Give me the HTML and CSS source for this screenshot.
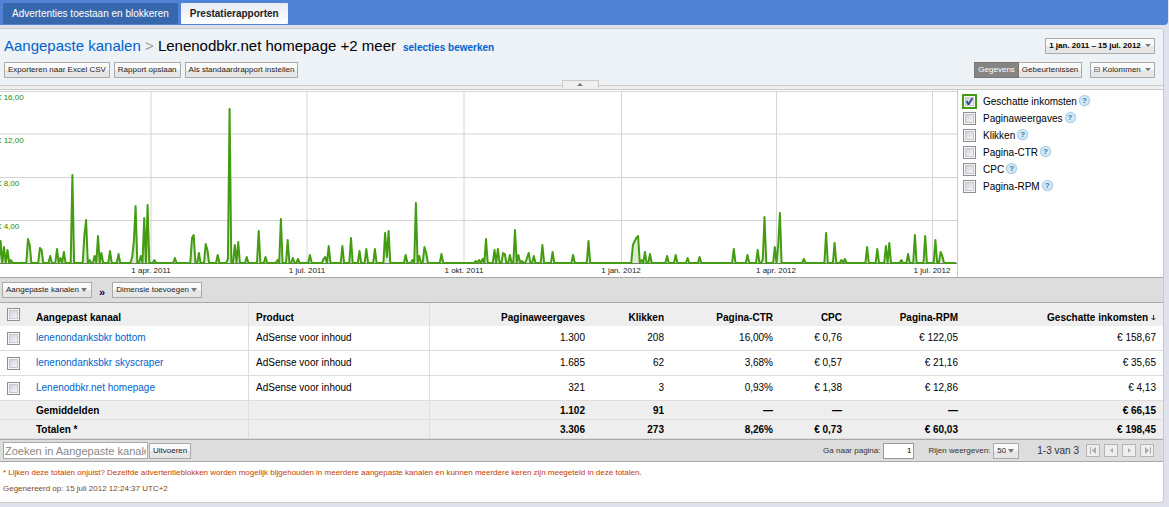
FILE: index.html
```html
<!DOCTYPE html>
<html lang="nl">
<head>
  <meta charset="UTF-8">
  <meta name="viewport" content="width=device-width, initial-scale=1.0">
  <title>Prestatierapporten</title>
  <link rel="stylesheet" href="styles.css">
</head>
<body>

<nav class="tabs">
  <a class="tab" href="#">Advertenties toestaan en blokkeren</a>
  <a class="tab active" href="#">Prestatierapporten</a>
</nav>

<main class="panel">

  <header class="head">
    <div class="row">
      <h1><a href="#">Aangepaste kanalen</a> <span class="sep">&gt;</span> Lenenodbkr.net homepage +2 meer</h1>
      <a class="edit" href="#">selecties bewerken</a>
      <button class="btn date right" type="button">1 jan. 2011 – 15 jul. 2012 <span class="arrow"></span></button>
    </div>
    <div class="row tools">
      <button class="btn" type="button">Exporteren naar Excel CSV</button>
      <button class="btn" type="button">Rapport opslaan</button>
      <button class="btn" type="button">Als standaardrapport instellen</button>
      <div class="switch right">
        <button class="btn on" type="button">Gegevens</button><button class="btn" type="button">Gebeurtenissen</button>
      </div>
      <button class="btn columns" type="button">
        <svg width="6" height="5" viewBox="0 0 6 5"><path d="M0 .5h6M0 2.5h6M0 4.5h6M.5 0v5M5.5 0v5" stroke="#999" fill="none"/></svg>
        Kolommen <span class="arrow"></span>
      </button>
    </div>
    <button class="handle" type="button" aria-label="Inklappen"><svg width="6" height="3" viewBox="0 0 6 3"><path d="M3 0l3 3H0z" fill="#777"/></svg></button>
  </header>

  <section class="report">
    <svg class="chart" viewBox="0 0 957 187">
      <g class="grid">
        <path d="M0 1.5H957M0 44H957M0 87.5H957M0 130.5H957"/>
        <path d="M151 1V173M307 1V173M464 1V173M621.5 1V173M776.5 1V173M932.5 1V173"/>
      </g>
      <path class="axis" d="M0 173.5H957"/>
      <path class="line" id="line"/>
      <g class="money">
        <text x="-3" y="10">€ 16,00</text>
        <text x="-3" y="53">€ 12,00</text>
        <text x="-3" y="96">€ 8,00</text>
        <text x="-3" y="139">€ 4,00</text>
      </g>
      <g class="dates">
        <text x="151" y="183">1 apr. 2011</text>
        <text x="307" y="183">1 jul. 2011</text>
        <text x="464" y="183">1 okt. 2011</text>
        <text x="621" y="183">1 jan. 2012</text>
        <text x="776" y="183">1 apr. 2012</text>
        <text x="932" y="183">1 jul. 2012</text>
      </g>
    </svg>
    <ul class="legend">
      <li class="picked"><input type="checkbox" id="m1" checked><label for="m1">Geschatte inkomsten</label><a class="help" href="#">?</a></li>
      <li><input type="checkbox" id="m2"><label for="m2">Paginaweergaves</label><a class="help" href="#">?</a></li>
      <li><input type="checkbox" id="m3"><label for="m3">Klikken</label><a class="help" href="#">?</a></li>
      <li><input type="checkbox" id="m4"><label for="m4">Pagina-CTR</label><a class="help" href="#">?</a></li>
      <li><input type="checkbox" id="m5"><label for="m5">CPC</label><a class="help" href="#">?</a></li>
      <li><input type="checkbox" id="m6"><label for="m6">Pagina-RPM</label><a class="help" href="#">?</a></li>
    </ul>
  </section>

  <div class="bar dims">
    <select class="btn" aria-label="Dimensie"><option>Aangepaste kanalen</option></select>
    <span class="raquo">»</span>
    <select class="btn" aria-label="Tweede dimensie"><option>Dimensie toevoegen</option></select>
  </div>

  <table class="data">
    <colgroup>
      <col class="c-check"><col class="c-name"><col class="c-product"><col class="c-views"><col class="c-clicks">
      <col class="c-ctr"><col class="c-cpc"><col class="c-rpm"><col>
    </colgroup>
    <thead>
      <tr>
        <th><input type="checkbox" aria-label="Alles selecteren"></th>
        <th>Aangepast kanaal</th>
        <th>Product</th>
        <th>Paginaweergaves</th>
        <th>Klikken</th>
        <th>Pagina-CTR</th>
        <th>CPC</th>
        <th>Pagina-RPM</th>
        <th>Geschatte inkomsten <svg width="5" height="6" viewBox="0 0 5 6"><path d="M2.5 0v5M.5 3l2 2 2-2" stroke="#333" fill="none"/></svg></th>
      </tr>
    </thead>
    <tbody>
      <tr>
        <td><input type="checkbox" aria-label="lenenondanksbkr bottom"></td>
        <td><a href="#">lenenondanksbkr bottom</a></td>
        <td>AdSense voor inhoud</td>
        <td>1.300</td><td>208</td><td>16,00%</td><td>€ 0,76</td><td>€ 122,05</td><td>€ 158,67</td>
      </tr>
      <tr>
        <td><input type="checkbox" aria-label="lenenondanksbkr skyscraper"></td>
        <td><a href="#">lenenondanksbkr skyscraper</a></td>
        <td>AdSense voor inhoud</td>
        <td>1.685</td><td>62</td><td>3,68%</td><td>€ 0,57</td><td>€ 21,16</td><td>€ 35,65</td>
      </tr>
      <tr>
        <td><input type="checkbox" aria-label="Lenenodbkr.net homepage"></td>
        <td><a href="#">Lenenodbkr.net homepage</a></td>
        <td>AdSense voor inhoud</td>
        <td>321</td><td>3</td><td>0,93%</td><td>€ 1,38</td><td>€ 12,86</td><td>€ 4,13</td>
      </tr>
    </tbody>
    <tfoot>
      <tr>
        <td></td><td>Gemiddelden</td><td></td>
        <td>1.102</td><td>91</td><td>—</td><td>—</td><td>—</td><td>€ 66,15</td>
      </tr>
      <tr>
        <td></td><td>Totalen *</td><td></td>
        <td>3.306</td><td>273</td><td>8,26%</td><td>€ 0,73</td><td>€ 60,03</td><td>€ 198,45</td>
      </tr>
    </tfoot>
  </table>

  <div class="bar foot">
    <input class="search" type="text" aria-label="Zoeken" placeholder="Zoeken in Aangepaste kanalen">
    <button class="btn" type="button">Uitvoeren</button>
    <div class="pager">
      <label for="page">Ga naar pagina:</label>
      <input class="page" type="text" id="page" value="1">
      <label for="rows">Rijen weergeven:</label>
      <select class="btn" id="rows"><option>50</option></select>
      <span class="count">1-3 van 3</span>
      <button class="nav" type="button" aria-label="Eerste"><svg width="7" height="7" viewBox="0 0 7 7"><path d="M.5 0v7" stroke="#aaa"/><path d="M6 0v7L2 3.5z" fill="#aaa"/></svg></button>
      <button class="nav" type="button" aria-label="Vorige"><svg width="7" height="7" viewBox="0 0 7 7"><path d="M5 1v5L2 3.5z" fill="#aaa"/></svg></button>
      <button class="nav" type="button" aria-label="Volgende"><svg width="7" height="7" viewBox="0 0 7 7"><path d="M2 1v5l3-2.5z" fill="#aaa"/></svg></button>
      <button class="nav" type="button" aria-label="Laatste"><svg width="7" height="7" viewBox="0 0 7 7"><path d="M6.5 0v7" stroke="#aaa"/><path d="M1 0v7l4-3.5z" fill="#aaa"/></svg></button>
    </div>
  </div>

  <div class="notes">
    <p>* Lijken deze totalen onjuist? Dezelfde advertentieblokken worden mogelijk bijgehouden in meerdere aangepaste kanalen en kunnen meerdere keren zijn meegeteld in deze totalen.</p>
    <p class="stamp">Gegenereerd op: 15 juli 2012 12:24:37 UTC+2</p>
  </div>

</main>

<script src="chart.js"></script>
</body>
</html>
```

FILE: styles.css
```css
* {
  box-sizing: border-box;
}

body {
  margin: 0;
  font-family: "Liberation Sans", Arial, sans-serif;
  font-size: 10px;
  line-height: 12px;
  color: #000;
  background: #dfe2eb;
}

a {
  color: #0063cc;
  text-decoration: none;
}

button,
input,
select {
  margin: 0;
  font-family: inherit;
}

/* Tabs */
.tabs {
  display: flex;
  gap: 3px;
  height: 25px;
  margin-right: 1px;
  padding: 3px 3px 1px;
  background: #5083d5;
  border-bottom-right-radius: 4px;
}

.tab {
  padding: 5px 9px;
  color: #fff;
  background: #3768ad;
  border-radius: 1px;
}

.tab.active {
  font-weight: bold;
  color: #222;
  background: linear-gradient(#e4ecf5, #fff);
}

/* Panel */
.panel {
  margin: 3px 5px 4px 0;
  background: #fff;
  border: 1px solid #c9c9c9;
  border-left: 0;
  border-radius: 0 4px 4px 0;
}

.head {
  position: relative;
  padding: 8px 8px 7px 4px;
  background: #edf2f6;
  border-bottom: 1px solid #c9c9c9;
  border-top-right-radius: 4px;
}

.row {
  display: flex;
  align-items: center;
  height: 18px;
}

.tools {
  gap: 4px;
  height: 16px;
  margin-top: 7px;
}

.right {
  margin-left: auto;
}

h1 {
  margin: 0 7px 0 0;
  font-size: 15px;
  font-weight: normal;
  line-height: 18px;
}

.sep {
  color: #999;
}

.edit {
  padding-top: 4px;
  font-weight: bold;
}

.btn {
  height: 16px;
  padding: 0 3px;
  font-size: 8px;
  line-height: 14px;
  color: #222;
  white-space: nowrap;
  background: linear-gradient(#fafafa 50%, #e6e6e6 50%);
  border: 1px solid #aaa;
  border-radius: 0;
}

.arrow {
  display: inline-block;
  margin-left: 2px;
  vertical-align: middle;
  border: 3px solid transparent;
  border-top-color: #777;
  border-bottom: 0;
}

select.btn {
  appearance: none;
  padding-right: 12px;
  background:
    url("data:image/svg+xml,%3Csvg xmlns='http://www.w3.org/2000/svg' width='6' height='4'%3E%3Cpath d='M0 0h6L3 4z' fill='%23777'/%3E%3C/svg%3E") no-repeat right 4px center,
    linear-gradient(#fafafa 50%, #e6e6e6 50%);
}

.date {
  font-weight: bold;
  color: #000;
}

.switch {
  display: flex;
}

.switch .on {
  color: #fff;
  background: #858585;
  border-color: #777;
}

.switch .btn + .btn {
  border-left: 0;
}

.columns {
  margin-left: 4px;
}

.handle {
  position: absolute;
  bottom: -3px;
  left: 50%;
  display: flex;
  justify-content: center;
  width: 37px;
  height: 8px;
  margin-left: -20px;
  padding: 2px 0 0;
  background: #efefef;
  border: 1px solid #c9c9c9;
  border-bottom: 0;
}

/* Chart */
.report {
  display: flex;
  background: #fff;
  border-top: 1px solid #c9c9c9;
  border-bottom: 1px solid #a9a9a9;
  box-shadow: 0 -3px #efefef;
  margin-top: 3px;
}

.chart {
  display: block;
  flex: 1;
  min-width: 0;
  font-size: 8px;
}

.grid path {
  stroke: #d4d4d4;
}

.axis {
  stroke: #777;
}

.line {
  fill: #449c12;
  fill-opacity: .2;
  stroke: #449c12;
  stroke-width: 2;
  stroke-linejoin: round;
}

.money {
  fill: #238c00;
}

.dates {
  fill: #222;
  text-anchor: middle;
}

.legend {
  width: 206px;
  margin: 0;
  padding: 3px 5px;
  list-style: none;
  border-left: 1px solid #c9c9c9;
}

.legend li {
  display: flex;
  align-items: center;
  height: 17px;
}

.legend label {
  margin-left: 7px;
}

input[type="checkbox"] {
  appearance: none;
  display: block;
  width: 13px;
  height: 13px;
  background: linear-gradient(135deg, #c4c9d2, #fff);
  border: 1px solid #8e8f8f;
  box-shadow: inset 0 0 0 1px #f6f6f6, inset 0 0 0 2px #c5c9cf;
}

input[type="checkbox"]:checked {
  background:
    url("data:image/svg+xml,%3Csvg xmlns='http://www.w3.org/2000/svg' width='11' height='11'%3E%3Cpath d='M2.500 5l2 3.500L8.500 2' fill='none' stroke='%233a4f9a' stroke-width='2'/%3E%3C/svg%3E") no-repeat,
    linear-gradient(135deg, #c4c9d2, #fff);
}

.legend .picked input {
  outline: 2px solid #449c12;
  outline-offset: -1px;
}

.help {
  flex: none;
  width: 9px;
  height: 9px;
  margin: 0 0 3px 3px;
  font-size: 8px;
  font-weight: bold;
  line-height: 9px;
  text-align: center;
  color: #2f78ab;
  background: #d3e9f6;
  border-radius: 5px;
  box-shadow: 0 0 1px 1px #9cc6e0;
}

/* Toolbars */
.bar {
  display: flex;
  align-items: center;
  height: 25px;
  background: #ddd;
  border-bottom: 1px solid #a9a9a9;
}

.dims {
  padding: 0 2px;
}

.raquo {
  margin: 3px 7px 0;
  font-size: 11px;
  font-weight: bold;
  color: #006;
}

/* Table */
.data {
  width: 100%;
  table-layout: fixed;
  border-collapse: separate;
  border-spacing: 0;
}

.c-check { width: 29px; }
.c-name { width: 220px; }
.c-product { width: 181px; }
.c-views { width: 162px; }
.c-clicks { width: 79px; }
.c-ctr { width: 109px; }
.c-cpc { width: 69px; }
.c-rpm { width: 116px; }

.data th,
.data td {
  height: 25px;
  padding: 0 7px;
  text-align: right;
  border-bottom: 1px solid #ddd;
}

.data th:nth-child(-n+3),
.data td:nth-child(-n+3) {
  text-align: left;
}

.data th:nth-child(2),
.data th:nth-child(3),
.data td:nth-child(2),
.data td:nth-child(3) {
  border-right: 1px solid #ddd;
}

.data thead th {
  height: 23px;
  padding-top: 6px;
  background: #eee;
  border-bottom: 0;
}

.data thead th:first-child {
  padding-top: 0;
}

.data tfoot td {
  height: 19px;
  padding-top: 2px;
  font-weight: bold;
  background: #eee;
}

/* Search and paging */
.foot {
  height: 23px;
  padding: 0 9px 0 3px;
  border-top: 1px solid #a9a9a9;
}

.search {
  width: 145px;
  height: 17px;
  margin-right: 1px;
  padding: 0 1px;
  font-size: 11px;
  background: #fff;
  border: 1px solid #aaa;
}

.search::placeholder {
  color: #888;
}

.pager {
  display: flex;
  align-items: center;
  margin-left: auto;
  color: #333;
}

.pager label {
  margin-right: 3px;
  font-size: 8px;
}

.page {
  width: 31px;
  height: 16px;
  margin-right: 14px;
  padding: 0 2px;
  font-size: 8px;
  text-align: right;
  border: 1px solid #999;
}

.count {
  margin: 0 3px 0 18px;
}

.nav {
  display: flex;
  align-items: center;
  justify-content: center;
  width: 14px;
  height: 13px;
  margin-left: 4px;
  padding: 0;
  background: #eee;
  border: 1px solid #b5b5b5;
}

.notes {
  padding: 5px 3px 3px;
  font-size: 8px;
  color: #c33c00;
}

.notes p {
  margin: 0 0 4px;
}

.notes .stamp {
  color: #7a4a1c;
}
```

FILE: chart.js
```javascript
// one step per day, day 0 = 1 jan. 2011
var STEP = 1.709;
var START = -2.8;
var BASE = 173;
var DAYS = 562;

// [x, height] of every day with income
var peaks = [
  [0, 22], [4.5, 16], [8, 13], [11, 3], [28.7, 24], [30, 18], [40.5, 15], [42, 13], [51, 7], [57.5, 14],
  [61, 5], [64.3, 11], [73, 88], [85, 28], [86.7, 43], [90, 3], [95, 7], [98.5, 27], [102, 10], [110.5, 12],
  [119, 9], [133, 6], [134.5, 22], [136, 57], [141, 7], [144.5, 45], [148, 58], [155, 3], [175.5, 5], [192.5, 25],
  [194, 28], [199, 10], [206, 19], [208, 13], [218.5, 8], [228, 4], [230, 154], [235, 18], [238.7, 21], [246, 6],
  [259, 32], [266, 6], [278, 3], [281.5, 44], [288, 23], [293, 5], [298, 4], [310.5, 8], [323, 4], [326, 6],
  [329, 17], [343, 17], [351.5, 25], [359.7, 12], [366.7, 14], [375.3, 14], [385.5, 30], [387, 6], [389, 32],
  [406, 8], [411.7, 3], [416.5, 60], [420, 7], [425, 16], [426.5, 10], [442, 9], [476, 2], [479.5, 3], [483, 4],
  [486.5, 24], [494.7, 13], [498.5, 14], [503.5, 10], [505, 9], [510.5, 8], [515.5, 33], [519, 8], [522.5, 2],
  [526.5, 5], [529, 10], [534, 7], [543, 18], [553, 11], [573.5, 8], [589, 22], [632.7, 18], [634, 22], [636, 25],
  [637.5, 27], [641.5, 3], [645, 11], [650.5, 9], [667.5, 7], [676, 8], [688, 5], [700, 6], [734, 14], [747.7, 8],
  [758, 13], [762, 4], [765, 46], [775, 16], [778, 18], [780, 50], [804, 4], [826, 30], [835, 20], [841.5, 3],
  [845, 4], [867.5, 16], [877.7, 14], [886, 17], [889.5, 20], [901.5, 3], [908.5, 9], [915, 28], [925.5, 27],
  [935.7, 23], [940.7, 11], [942, 7]
];

var days = [];
for (var i = 0; i < DAYS; i++) days[i] = 0;
peaks.forEach(function (p) {
  days[Math.round((p[0] - START) / STEP)] = p[1];
});

var d = days.map(function (h, i) {
  return (i ? "L" : "M") + (START + i * STEP).toFixed(1) + " " + (BASE - h);
}).join("");
document.getElementById("line").setAttribute("d", d);
```
